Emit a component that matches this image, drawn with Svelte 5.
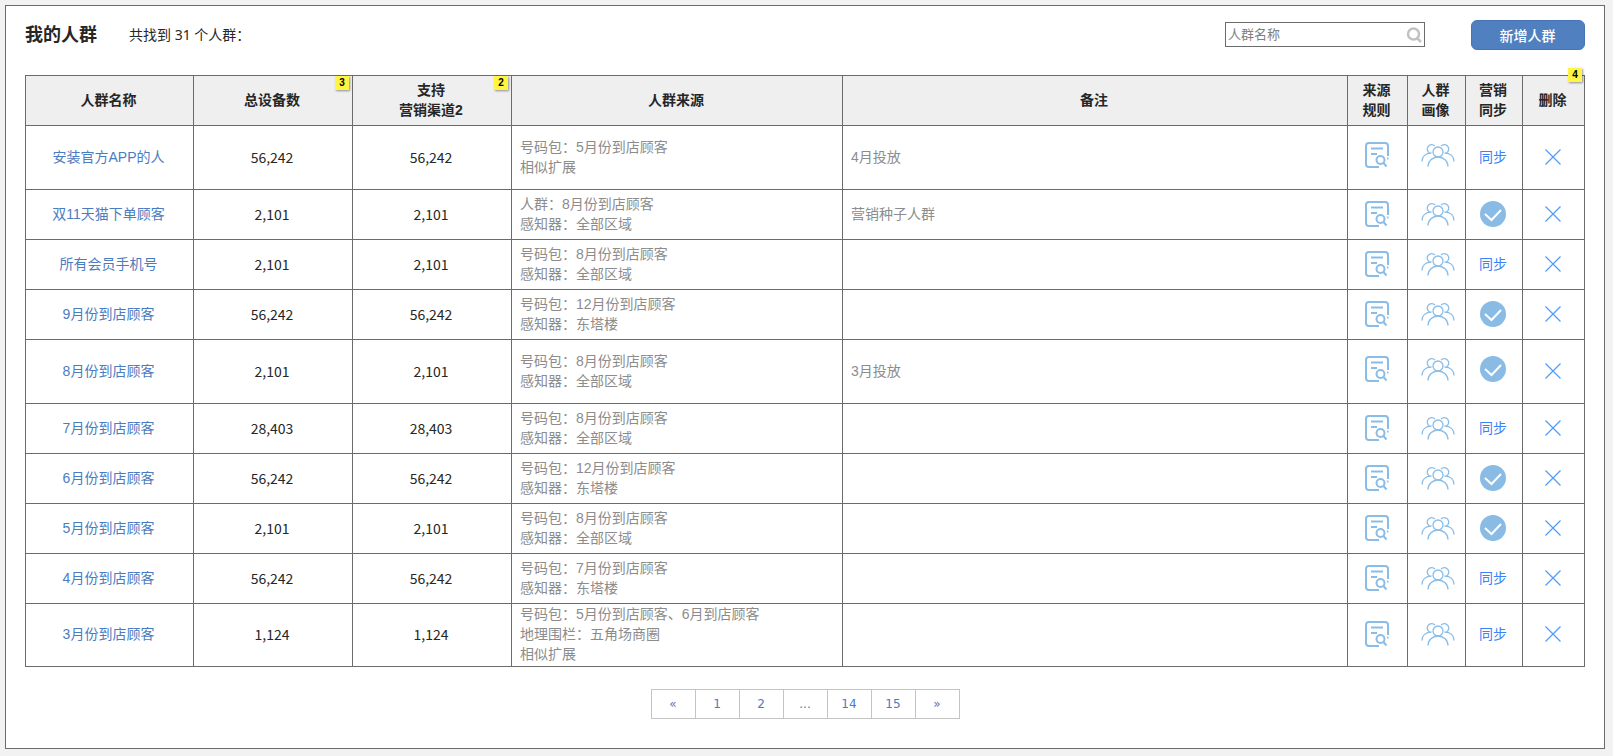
<script>
  const rows = [
    { name: '安装官方APP的人', total: '56,242', channel: '56,242', source: ['号码包：5月份到店顾客', '相似扩展'], remark: '4月投放', synced: false, tall: true },
    { name: '双11天猫下单顾客', total: '2,101', channel: '2,101', source: ['人群：8月份到店顾客', '感知器：全部区域'], remark: '营销种子人群', synced: true },
    { name: '所有会员手机号', total: '2,101', channel: '2,101', source: ['号码包：8月份到店顾客', '感知器：全部区域'], remark: '', synced: false },
    { name: '9月份到店顾客', total: '56,242', channel: '56,242', source: ['号码包：12月份到店顾客', '感知器：东塔楼'], remark: '', synced: true },
    { name: '8月份到店顾客', total: '2,101', channel: '2,101', source: ['号码包：8月份到店顾客', '感知器：全部区域'], remark: '3月投放', synced: true, tall: true },
    { name: '7月份到店顾客', total: '28,403', channel: '28,403', source: ['号码包：8月份到店顾客', '感知器：全部区域'], remark: '', synced: false },
    { name: '6月份到店顾客', total: '56,242', channel: '56,242', source: ['号码包：12月份到店顾客', '感知器：东塔楼'], remark: '', synced: true },
    { name: '5月份到店顾客', total: '2,101', channel: '2,101', source: ['号码包：8月份到店顾客', '感知器：全部区域'], remark: '', synced: true },
    { name: '4月份到店顾客', total: '56,242', channel: '56,242', source: ['号码包：7月份到店顾客', '感知器：东塔楼'], remark: '', synced: false },
    { name: '3月份到店顾客', total: '1,124', channel: '1,124', source: ['号码包：5月份到店顾客、6月到店顾客', '地理围栏：五角场商圈', '相似扩展'], remark: '', synced: false }
  ];

  const pages = ['«', '1', '2', '...', '14', '15', '»'];

  let keyword = '';
</script>

<main class="panel">
  <header class="toolbar">
    <h1>我的人群</h1>
    <p class="summary">共找到<span class="count">&nbsp;31&nbsp;</span>个人群：</p>
    <form class="search" on:submit|preventDefault>
      <input type="text" placeholder="人群名称" aria-label="人群名称" bind:value={keyword} />
      <button type="submit" class="icon-button" aria-label="搜索">
        <svg width="16" height="16" viewBox="0 0 16 16">
          <circle cx="7.5" cy="7" r="5.5" />
          <path d="M11 11L15 15" />
        </svg>
      </button>
    </form>
    <button type="button" class="create">新增人群</button>
  </header>

  <table>
    <colgroup>
      <col class="col-name" />
      <col class="col-count" />
      <col class="col-count" />
      <col class="col-source" />
      <col />
      <col class="col-rule" />
      <col class="col-profile" />
      <col class="col-sync" />
      <col class="col-delete" />
    </colgroup>
    <thead>
      <tr>
        <th>人群名称</th>
        <th>总设备数<span class="note">3</span></th>
        <th>支持<br />营销渠道2<span class="note">2</span></th>
        <th>人群来源</th>
        <th>备注</th>
        <th>来源<br />规则</th>
        <th>人群<br />画像</th>
        <th>营销<br />同步</th>
        <th>删除<span class="note raised">4</span></th>
      </tr>
    </thead>
    <tbody>
      {#each rows as row}
        <tr class:tall={row.tall}>
          <td><a href="#detail">{row.name}</a></td>
          <td class="number">{row.total}</td>
          <td class="number">{row.channel}</td>
          <td class="text">
            {#each row.source as line}
              <div>{line}</div>
            {/each}
          </td>
          <td class="text">{row.remark}</td>
          <td class="icon">
            <button type="button" class="icon-button" aria-label="来源规则">
              <svg class="rule" width="24" height="26" viewBox="0 0 24 26">
                <path d="M14 25H4a3 3 0 0 1-3-3V4a3 3 0 0 1 3-3h16a3 3 0 0 1 3 3v10" />
                <path d="M6 6.5h12M6 12h6" />
                <circle cx="15.5" cy="18" r="4" />
                <path d="M18.5 21l3 3.5M22 16.5h1.5" />
              </svg>
            </button>
          </td>
          <td class="icon profile">
            <button type="button" class="icon-button" aria-label="人群画像">
              <svg class="people" width="34" height="24" viewBox="0 0 34 24">
                <circle cx="17" cy="9" r="5" />
                <path d="M7 23.5a10 9.500 0 0 1 20 0" />
                <path d="M8.5 10a4.5 4.5 0 1 1 5.500-7M20 3a4.5 4.5 0 1 1 5.500 7" />
                <path d="M1 18.500c0-5 3.500-8.500 9.500-8.500M33 18.500c0-5-3.500-8.500-9.500-8.500" />
              </svg>
            </button>
          </td>
          <td class:icon={row.synced}>
            {#if row.synced}
              <svg class="check" width="26" height="26" viewBox="0 0 26 26" role="img" aria-label="已同步">
                <circle cx="13" cy="13" r="13" />
                <path d="M5 13l6.500 6L21 9" />
              </svg>
            {:else}
              <a class="sync" href="#sync">同步</a>
            {/if}
          </td>
          <td>
            <button type="button" class="icon-button" aria-label="删除">
              <svg class="cross" width="16" height="16" viewBox="0 0 16 16">
                <path d="M0.500 0.500l15 15M15.500 0.500l-15 15" />
              </svg>
            </button>
          </td>
        </tr>
      {/each}
    </tbody>
  </table>

  <nav class="pager" aria-label="分页">
    {#each pages as page}
      <a href="#page">{page}</a>
    {/each}
  </nav>
</main>

<style>
  :global(body) {
    background: #f2f2f2;
  }

  .panel {
    margin: 5px 8px 0 5px;
    padding: 14px 19px 29px;
    border: 1px solid #6b6b6b;
    background: #fff;
    color: #262626;
    font-family: 'Liberation Sans', 'Noto Sans CJK SC', sans-serif;
    font-size: 14px;
    line-height: 20px;
  }

  .toolbar {
    display: flex;
    align-items: center;
    height: 30px;
    margin-bottom: 25px;
  }

  h1 {
    margin: 0 32px 0 0;
    font-size: 18px;
    line-height: 30px;
  }

  .summary {
    margin: 0;
  }

  .count {
    font-family: 'Noto Sans', sans-serif;
  }

  .search {
    display: flex;
    align-items: center;
    box-sizing: border-box;
    width: 200px;
    height: 25px;
    margin: 0 46px 1px auto;
    padding: 0 2px;
    border: 1px solid #6b6b6b;
  }

  .search input {
    flex: 1;
    min-width: 0;
    padding: 0;
    border: 0;
    outline: none;
    background: none;
    color: #262626;
    font-family: inherit;
    font-size: 13px;
  }

  .search input::placeholder {
    color: #808080;
  }

  .search svg {
    fill: none;
    stroke: #c2c2c2;
    stroke-width: 2.5;
  }

  .create {
    width: 114px;
    height: 30px;
    padding: 0 1px 1px 0;
    border: 1px solid #4674b4;
    border-radius: 6px;
    background: #5080c0;
    color: #fff;
    font-family: inherit;
    font-size: 14px;
    font-weight: 500;
    cursor: pointer;
  }

  .icon-button {
    display: block;
    margin: 0 auto;
    padding: 0;
    border: 0;
    background: none;
    cursor: pointer;
  }

  svg {
    display: block;
    margin: 0 auto;
  }

  table {
    width: 100%;
    table-layout: fixed;
    border-collapse: collapse;
  }

  .col-name {
    width: 168px;
  }

  .col-count {
    width: 159px;
  }

  .col-source {
    width: 331px;
  }

  .col-rule {
    width: 60px;
  }

  .col-profile {
    width: 58px;
  }

  .col-sync {
    width: 57px;
  }

  .col-delete {
    width: 62px;
  }

  th,
  td {
    height: 47px;
    padding: 0 2px 2px 0;
    border: 1px solid #6b6b6b;
    text-align: center;
    vertical-align: middle;
  }

  th {
    position: relative;
    background: #efefef;
  }

  .tall td {
    height: 61px;
  }

  tbody tr:last-child td {
    height: 60px;
  }

  .number {
    font-family: 'Noto Sans CJK SC', sans-serif;
  }

  .text {
    padding: 0 8px 2px;
    color: #8c8c8c;
    text-align: left;
  }

  .tall .icon {
    height: 57px;
    padding-bottom: 6px;
  }

  .profile {
    padding-left: 4px;
  }

  a {
    color: #4a7cc2;
    text-decoration: none;
  }

  .sync {
    color: #3a82f7;
  }

  .note {
    position: absolute;
    top: 0;
    right: 3px;
    width: 14px;
    height: 14px;
    background: #fff542;
    box-shadow: 1px 1px 2px rgba(0, 0, 0, 0.4);
    color: #000;
    font-size: 10px;
    line-height: 14px;
  }

  .raised {
    top: -8px;
    right: 2px;
  }

  .rule {
    fill: none;
    stroke: #89bde8;
    stroke-width: 2;
  }

  .people {
    fill: none;
    stroke: #89bde8;
    stroke-width: 1.3;
  }

  .check {
    fill: #89bbe5;
  }

  .check path {
    fill: none;
    stroke: #fff;
    stroke-width: 2;
  }

  .cross {
    stroke: #4f9bfa;
    stroke-width: 1.2;
  }

  .pager {
    display: flex;
    width: fit-content;
    margin: 22px auto 0;
    border: 1px solid #c4c4c4;
    font-family: 'DejaVu Sans', sans-serif;
    font-size: 12px;
  }

  .pager a {
    width: 43px;
    line-height: 28px;
    text-align: center;
  }

  .pager a + a {
    border-left: 1px solid #c4c4c4;
  }
</style>
